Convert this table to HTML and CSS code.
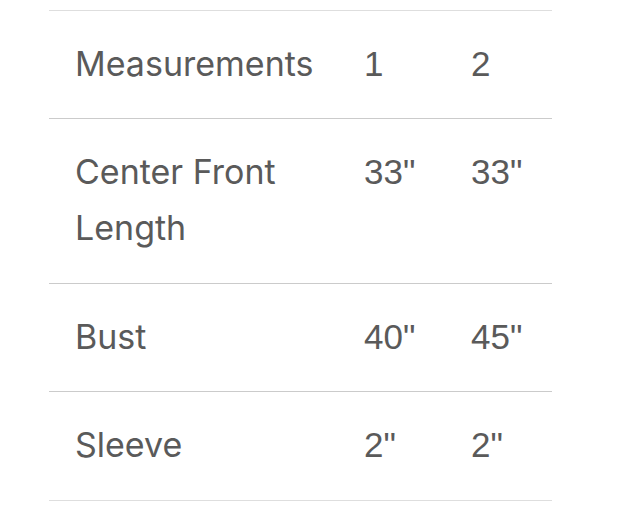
FILE: index.html
```html
<!DOCTYPE html>
<html>
<head>
<meta charset="utf-8">
<link rel="stylesheet" href="styles.css">
</head>
<body>
<div class="wrap">
  <table class="spec">
    <tr class="row first">
      <td class="label">Measurements</td>
      <td class="num">1</td>
      <td class="num">2</td>
    </tr>
    <tr class="row tall">
      <td class="label">Center Front Length</td>
      <td class="num">33"</td>
      <td class="num">33"</td>
    </tr>
    <tr class="row">
      <td class="label">Bust</td>
      <td class="num">40"</td>
      <td class="num">45"</td>
    </tr>
    <tr class="row last">
      <td class="label">Sleeve</td>
      <td class="num">2"</td>
      <td class="num">2"</td>
    </tr>
  </table>
</div>
</body>
</html>
```
FILE: styles.css
```css
html, body {
  margin: 0;
  padding: 0;
  background: #fff;
}
.wrap {
  padding: 10px 0 0 49px;
}
.spec {
  border-collapse: collapse;
  width: 501px;
  table-layout: fixed;
  color: #5a5a5a;
  font-family: "Inter", "Liberation Sans", sans-serif;
  font-size: 34px;
  line-height: 56px;
}
.spec td {
  border-top: 1px solid #cbcbcb;
  border-bottom: 1px solid #cbcbcb;
  padding: 25px 0 26px 26px;
  vertical-align: top;
}
.tall td, .last td { padding-bottom: 27px; }
.first td { border-top-color: #dedede; }
.last td { border-bottom-color: #dedede; }
.label { width: 263px; }
.num {
  width: 81px;
  padding-left: 24px;
  font-family: "Liberation Sans", Arial, sans-serif;
  font-size: 35px;
}
```
